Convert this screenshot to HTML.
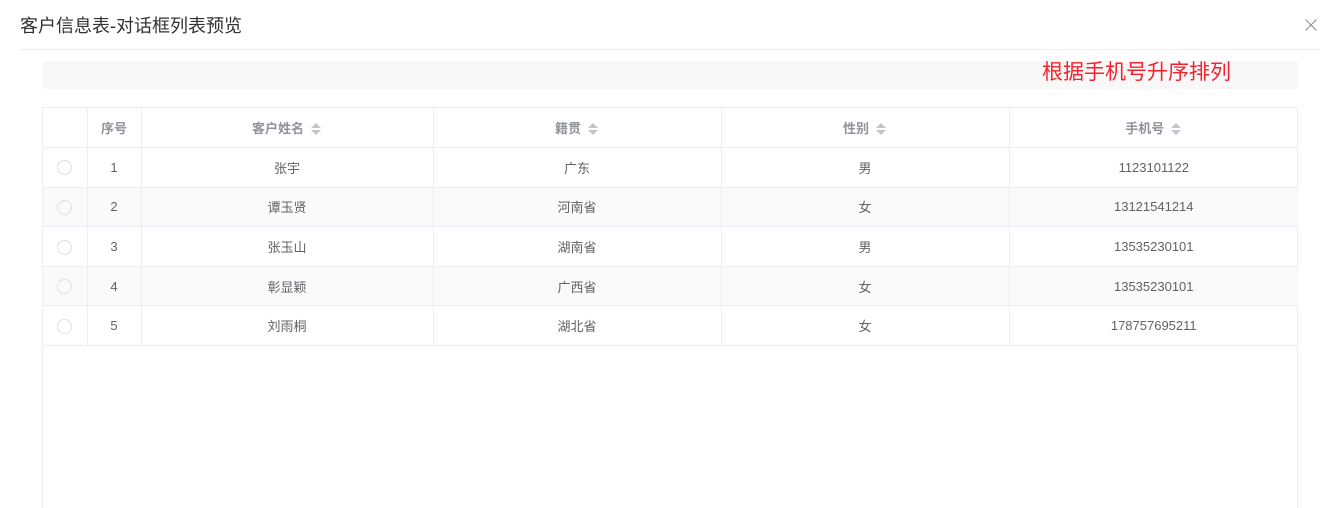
<!DOCTYPE html><html><head><meta charset="utf-8"><style>
body{margin:0;width:1331px;height:493px;background:#fff;font-family:"Liberation Sans","Noto Sans CJK SC",sans-serif;overflow:hidden;position:relative}
.t{position:absolute;left:20px;top:12px;font-size:18px;color:#303133}
.x{position:absolute;left:1304px;top:18px;width:14px;height:14px}
.hr{position:absolute;left:20px;top:49px;width:1300px;height:1px;background:#ebeef5}
.bar{position:absolute;left:42px;top:61px;width:1256px;height:28px;background:#f8f8f9}
.red{position:absolute;left:1042px;top:60px;font-size:21px;line-height:26px;color:#f5222d}
.tb{position:absolute;left:42px;top:107px;width:1254px;height:400px;border:1px solid #ebeef5;border-bottom:none}
table{border-collapse:collapse;width:1255px;font-size:13px;color:#606266;table-layout:fixed}
td,th{border-right:1px solid #ebeef5;border-bottom:1px solid #ebeef5;text-align:center;padding:0}
td:last-child,th:last-child{border-right:none}
th{height:39px;color:#909399;font-weight:bold}
td{height:38.6px}
tr.s td{background:#fafafa}
.r{display:inline-block;width:13px;height:13px;border:1px solid #dcdfe6;border-radius:50%;vertical-align:middle}
.ar{display:inline-block;vertical-align:middle;margin-left:6px;width:12px;height:14px;position:relative;top:-1px}
</style></head><body>
<div class="t">客户信息表-对话框列表预览</div>
<svg class="x" viewBox="0 0 14 14"><path d="M1.5 1.5L12.5 12.5M12.5 1.5L1.5 12.5" stroke="#909399" stroke-width="1.2"/></svg>
<div class="hr"></div>
<div class="bar"></div>
<div class="red">根据手机号升序排列</div>
<div class="tb"><table>
<colgroup><col style="width:44px"><col style="width:54px"><col style="width:292px"><col style="width:288px"><col style="width:288px"><col></colgroup>
<tr><th></th><th>序号</th><th>客户姓名<svg class="ar" viewBox="0 0 12 14"><path d="M1 6L6 1L11 6ZM1 8L6 13L11 8Z" fill="#c0c4cc"/></svg></th><th>籍贯<svg class="ar" viewBox="0 0 12 14"><path d="M1 6L6 1L11 6ZM1 8L6 13L11 8Z" fill="#c0c4cc"/></svg></th><th>性别<svg class="ar" viewBox="0 0 12 14"><path d="M1 6L6 1L11 6ZM1 8L6 13L11 8Z" fill="#c0c4cc"/></svg></th><th>手机号<svg class="ar" viewBox="0 0 12 14"><path d="M1 6L6 1L11 6ZM1 8L6 13L11 8Z" fill="#c0c4cc"/></svg></th></tr>
<tr><td><span class="r"></span></td><td>1</td><td>张宇</td><td>广东</td><td>男</td><td>1123101122</td></tr>
<tr class="s"><td><span class="r"></span></td><td>2</td><td>谭玉贤</td><td>河南省</td><td>女</td><td>13121541214</td></tr>
<tr><td><span class="r"></span></td><td>3</td><td>张玉山</td><td>湖南省</td><td>男</td><td>13535230101</td></tr>
<tr class="s"><td><span class="r"></span></td><td>4</td><td>彰显颖</td><td>广西省</td><td>女</td><td>13535230101</td></tr>
<tr><td><span class="r"></span></td><td>5</td><td>刘雨桐</td><td>湖北省</td><td>女</td><td>178757695211</td></tr>
</table></div>
</body></html>
